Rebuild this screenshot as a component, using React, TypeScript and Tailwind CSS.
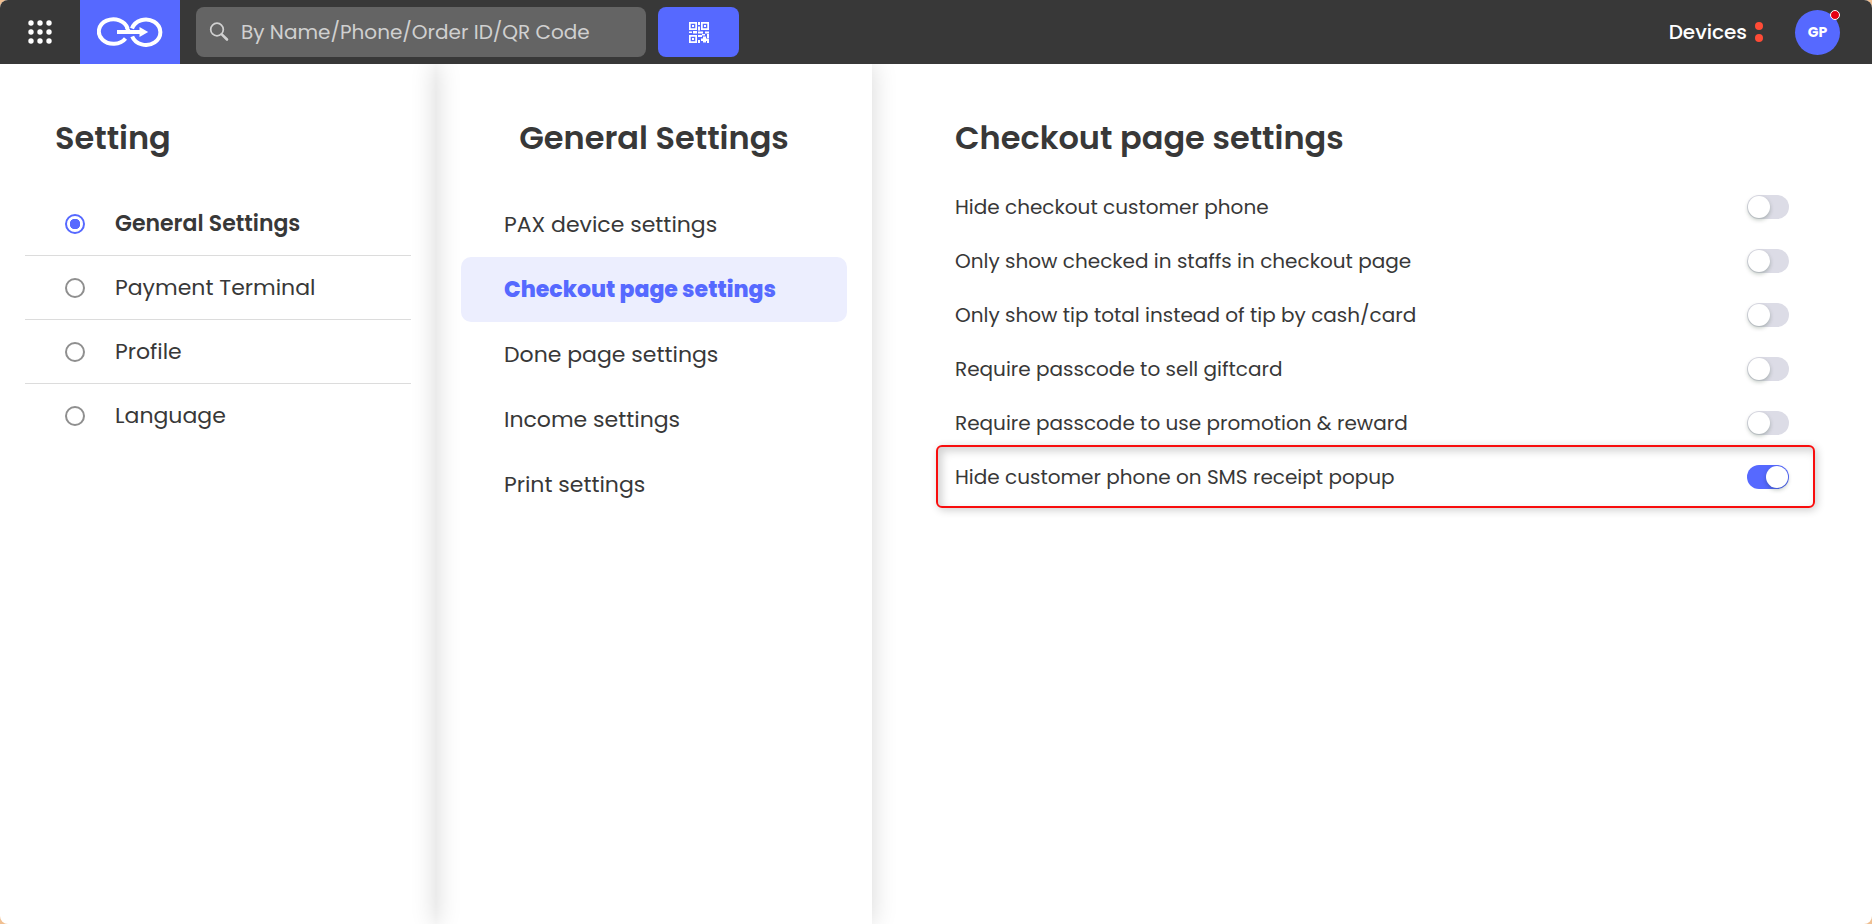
import { useState } from "react";

const menu = ["General Settings", "Payment Terminal", "Profile", "Language"];
const sections = [
  "PAX device settings",
  "Checkout page settings",
  "Done page settings",
  "Income settings",
  "Print settings",
];
const options = [
  "Hide checkout customer phone",
  "Only show checked in staffs in checkout page",
  "Only show tip total instead of tip by cash/card",
  "Require passcode to sell giftcard",
  "Require passcode to use promotion & reward",
  "Hide customer phone on SMS receipt popup",
];

function GridIcon() {
  return (
    <svg viewBox="0 0 24 24" className="size-6 fill-white" aria-hidden="true">
      {[3, 12, 21].map((y) =>
        [3, 12, 21].map((x) => <circle key={`${x}-${y}`} cx={x} cy={y} r="2.7" />),
      )}
    </svg>
  );
}

function Logo() {
  return (
    <svg viewBox="0 0 66 30" className="h-[30px] w-[66px]" fill="none" stroke="#fff" aria-hidden="true">
      <path d="M30.600 11.500A14.600 12.300 0 1 0 28.500 21.500" strokeWidth="4" />
      <path d="M35 11.500A14.500 12.700 0 1 1 35.200 19.500" strokeWidth="4" />
      <path d="M29.500 10.500L32.500 15" strokeWidth="3.600" />
      <path d="M20 15H44" strokeWidth="3.800" />
      <path d="M42.500 10L51.200 15L42.500 20Z" fill="#fff" stroke="none" />
    </svg>
  );
}

function QrIcon() {
  return (
    <svg viewBox="0 0 20 21" className="h-[21px] w-5 fill-white" aria-hidden="true">
      <path
        fillRule="evenodd"
        d="M0 0h8v8H0zM1.700 1.700v4.600h4.600V1.700zM12 0h8v8h-8zM13.700 1.700v4.600h4.600V1.700zM0 13h8v8H0zM1.700 14.700v4.600h4.600v-4.600z"
      />
      <path d="M3 3h2v2H3zM15 3h2v2h-2zM3 16h2v2H3zM9 0h2v3H9zM9 4.500h2v4H9zM0 9.500h3v1.500H0zM4 9h4v2.500H4zM9 9.500h5v2H9zM16 9.500h4v2h-4zM9 13h4v2H9zM13 12h3v1.500h-3zM18 12h2v4h-2zM9 18h2v3H9zM14 14.500h3v6h-3zM12 16.500h8v2.500h-8zM18 18h2v3h-2z" />
    </svg>
  );
}

export default function App() {
  const [page, setPage] = useState(0);
  const [section, setSection] = useState(1);
  const [enabled, setEnabled] = useState([false, false, false, false, false, true]);

  return (
    <div className="min-h-screen bg-[#f0bf91] font-['Poppins','Inter',sans-serif] text-[#383838]">
      <div className="flex min-h-screen flex-col overflow-hidden rounded-lg bg-white">
        <header className="relative flex h-16 items-center bg-[#383838]">
          <button aria-label="Apps" className="flex h-16 w-20 items-center justify-center">
            <GridIcon />
          </button>
          <a href="#" aria-label="Home" className="flex h-16 w-[100px] items-center justify-center bg-[#5669ff]">
            <Logo />
          </a>
          <label className="ml-4 flex h-[50px] w-[450px] items-center gap-3 rounded-lg bg-[#646464] px-[13px]">
            <svg viewBox="0 0 20 20" className="size-5 shrink-0" fill="none" stroke="#d0d0d0" aria-hidden="true">
              <circle cx="8" cy="7.500" r="6.300" strokeWidth="1.700" />
              <path d="M12.800 12.300L18 17.500" strokeWidth="2.600" strokeLinecap="round" />
            </svg>
            <input
              type="text"
              aria-label="Search"
              placeholder="By Name/Phone/Order ID/QR Code"
              className="min-w-0 flex-1 bg-transparent text-xl text-white outline-none placeholder:text-[#d0d0d0]"
            />
          </label>
          <button
            aria-label="Scan QR code"
            className="ml-3 flex h-[50px] w-[81px] items-center justify-center rounded-lg bg-[#5669ff]"
          >
            <QrIcon />
          </button>
          <button className="ml-auto flex items-center gap-2 text-xl font-medium text-white">
            Devices
            <span className="flex flex-col gap-1">
              <span className="size-2 rounded-full bg-[#ff4b36]" />
              <span className="size-2 rounded-full bg-[#ff4b36]" />
            </span>
          </button>
          <button className="relative mr-8 ml-8 size-[45px] rounded-full bg-[#5669ff] text-sm font-bold text-white">
            GP
            <span className="absolute top-0 right-0 size-2.5 rounded-full border border-white bg-[#e60012]" />
          </button>
        </header>

        <main className="grid flex-1 grid-cols-[436fr_436fr_1000fr]">
          <section className="px-[25px] pt-[50px] shadow-[0_0_24px_rgba(0,0,0,0.16)]">
            <h1 className="pl-[30px] text-[32px] leading-12 font-semibold">Setting</h1>
            <div className="mt-[30px]">
              {menu.map((label, i) => (
                <label
                  key={label}
                  className={`flex h-16 items-center gap-[30px] border-b border-[#dcdcdc] pl-10 text-[22px] last:border-transparent ${page === i ? "font-semibold" : "font-normal"}`}
                >
                  <input
                    type="radio"
                    name="page"
                    checked={page === i}
                    onChange={() => setPage(i)}
                    className="size-5 appearance-none rounded-full border-2 border-[#8f8f8f] checked:border-[#5669ff] checked:bg-[radial-gradient(circle,#5669ff_5px,transparent_5.5px)]"
                  />
                  {label}
                </label>
              ))}
            </div>
          </section>

          <section className="px-[25px] pt-[50px] shadow-[0_0_24px_rgba(0,0,0,0.16)]">
            <h2 className="text-center text-[32px] leading-12 font-semibold">General Settings</h2>
            <nav className="mt-[30px] flex flex-col">
              {sections.map((label, i) => (
                <button
                  key={label}
                  onClick={() => setSection(i)}
                  className={`h-[65px] rounded-[10px] pl-[43px] text-left text-[22px] ${section === i ? "bg-[#eceefe] font-extrabold text-[#5669ff]" : "font-normal"}`}
                >
                  {label}
                </button>
              ))}
            </nav>
          </section>

          <section className="pt-[50px] pr-[57px] pl-16">
            <h2 className="pl-[19px] text-[32px] leading-12 font-semibold">Checkout page settings</h2>
            <div className="mt-[18px] flex flex-col">
              {options.map((label, i) => (
                <label
                  key={label}
                  className="relative flex h-[54px] items-center justify-between pr-[26px] pl-[19px] text-xl font-normal"
                >
                  {label}
                  <input
                    type="checkbox"
                    role="switch"
                    checked={enabled[i]}
                    onChange={() => setEnabled(enabled.map((v, k) => (k === i ? !v : v)))}
                    className="h-6 w-[42px] appearance-none rounded-full bg-[#dcdce6] p-px before:block before:size-[22px] before:rounded-full before:bg-white before:shadow-[0_2px_4px_rgba(0,35,11,0.25)] checked:bg-[#5669ff] checked:before:ml-auto"
                  />
                  {i === 5 && (
                    <span className="pointer-events-none absolute inset-x-0 -top-[5px] -bottom-1 rounded-md border-2 border-[#f80d0d] shadow-[2px_2px_8px_rgba(0,0,0,0.2),inset_4px_4px_8px_rgba(0,0,0,0.18)]" />
                  )}
                </label>
              ))}
            </div>
          </section>
        </main>
      </div>
    </div>
  );
}
